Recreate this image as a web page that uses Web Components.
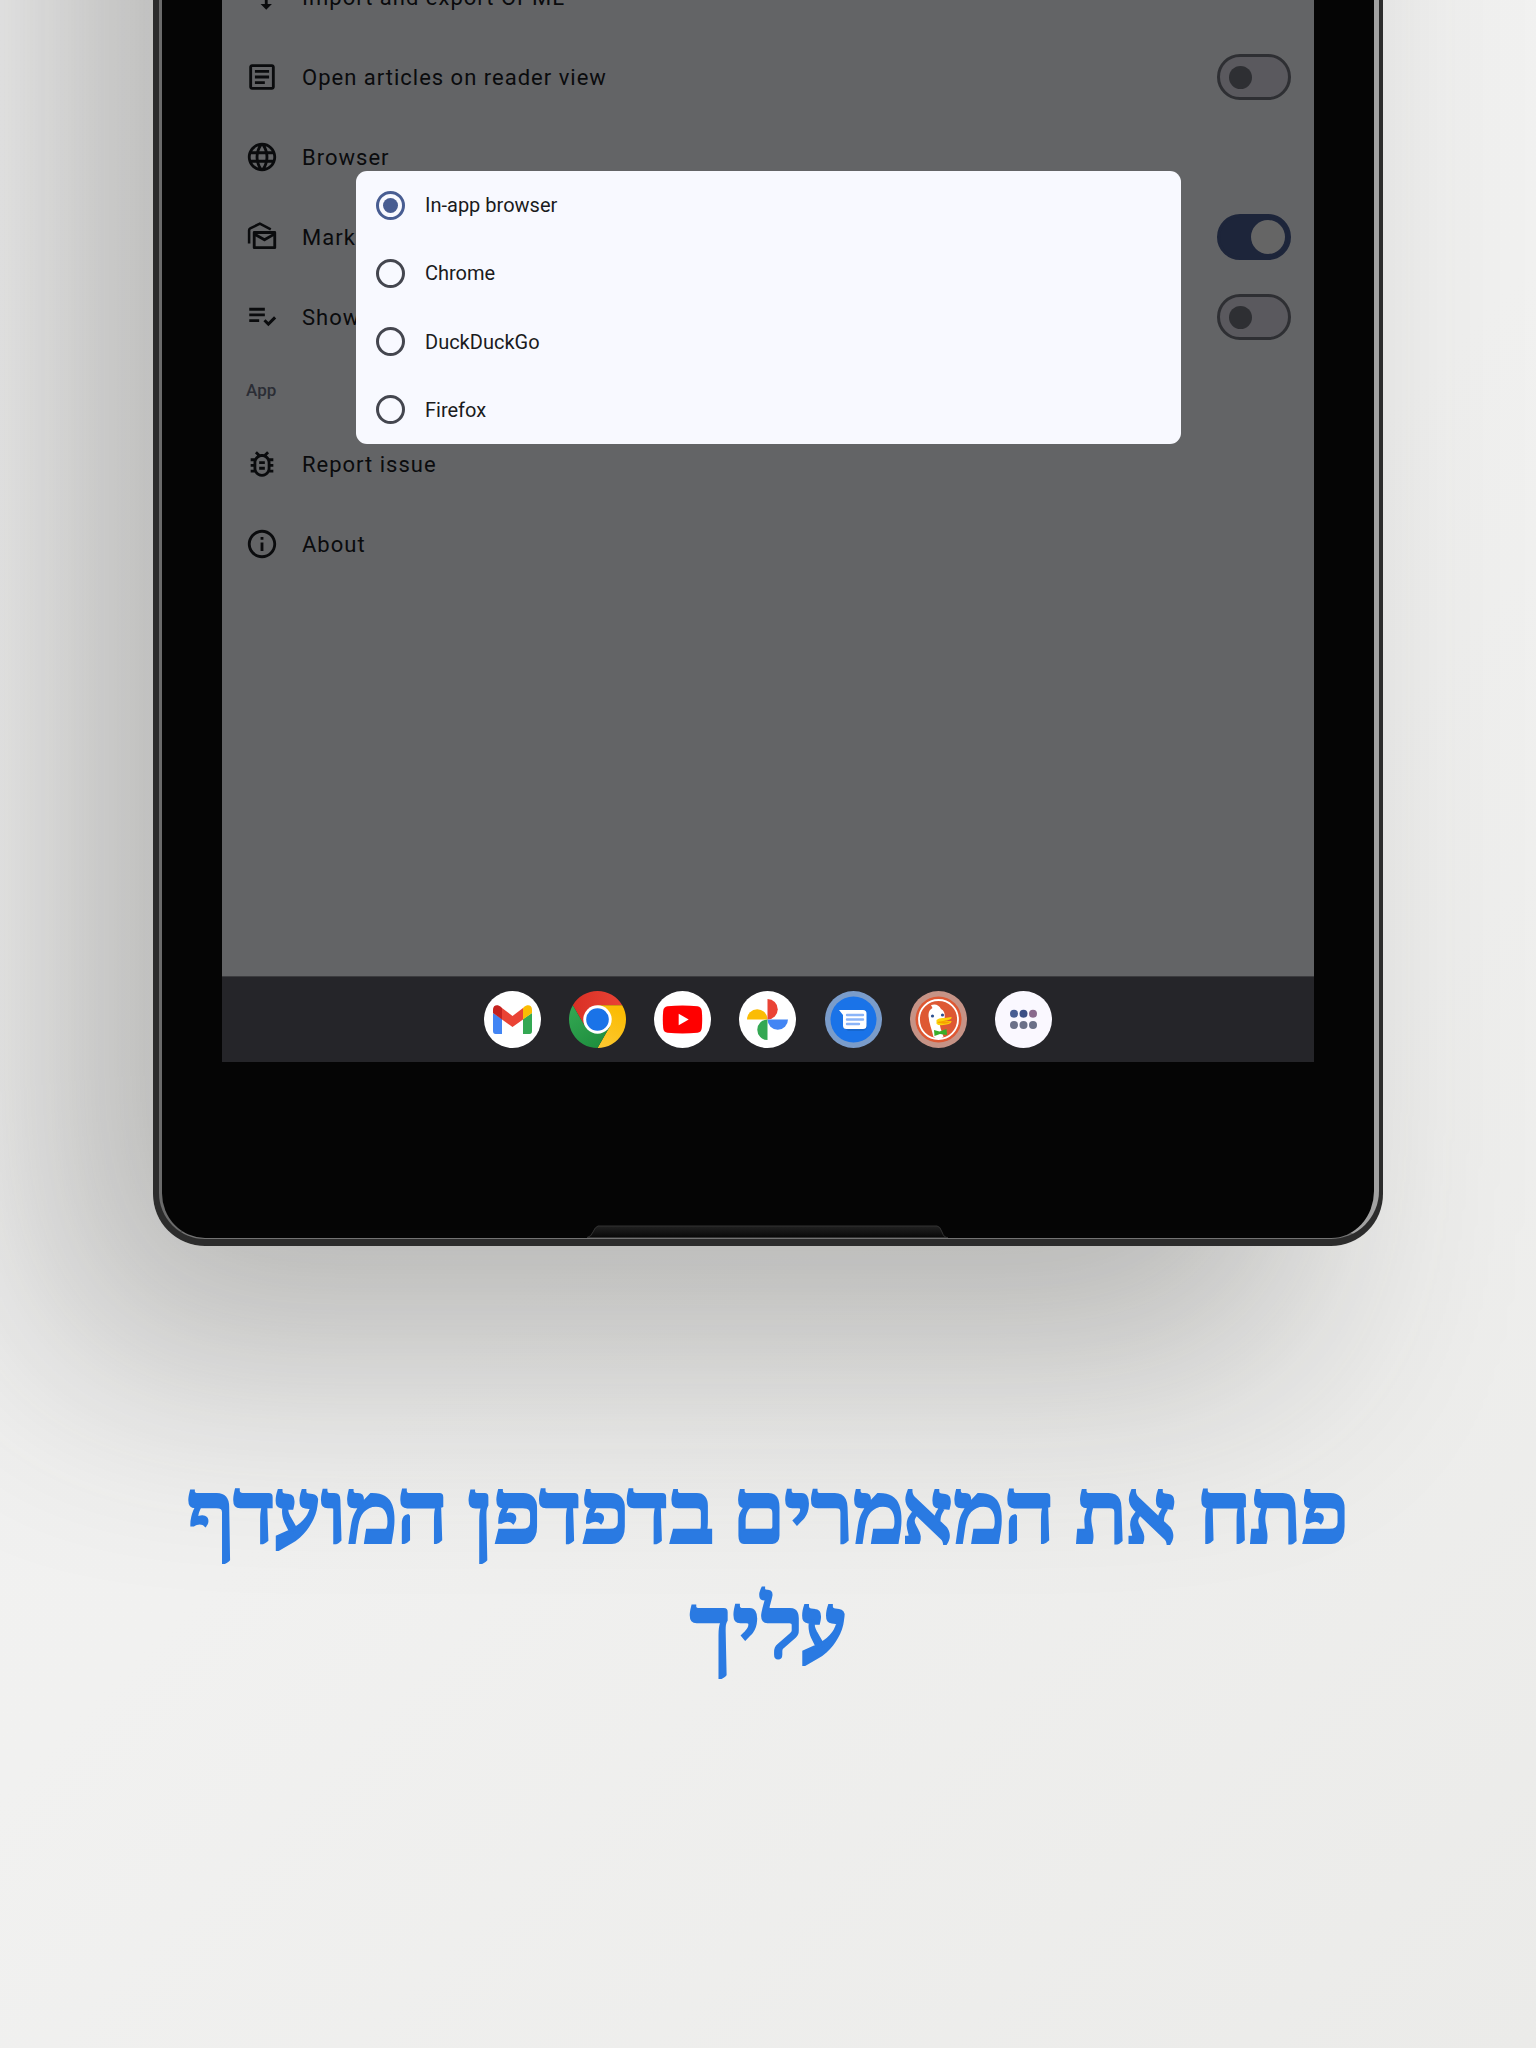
<!DOCTYPE html>
<html lang="he">
<head>
<meta charset="utf-8">
<title>Preferred browser</title>
<style>
html{min-height:100%;background:linear-gradient(135deg,#f2f2f2 0%,#f1f1f0 50%,#ebebe9 100%)}
body{margin:0;overflow-x:hidden}
</style>
</head>
<body>
<promo-page></promo-page>
<script>
const define = (name, html, setup) => customElements.define(name, class extends HTMLElement {
  connectedCallback() {
    if (this.shadowRoot) return;
    const t = document.createElement('template');
    t.innerHTML = html;
    this.attachShadow({ mode: 'open' }).append(t.content.cloneNode(true));
    if (setup) setup(this, this.shadowRoot);
  }
});

const ICONS = {
  swap: '<path d="M9 3 5 6.99h3V14h2V6.99h3L9 3zm7 14.01V10h-2v7.01h-3L15 21l4-3.99h-3z"/>',
  article: '<path d="M19 5v14H5V5h14m0-2H5c-1.1 0-2 .9-2 2v14c0 1.1.9 2 2 2h14c1.1 0 2-.9 2-2V5c0-1.1-.9-2-2-2z"/><path d="M14 17H7v-2h7v2zm3-4H7v-2h10v2zm0-4H7V7h10v2z"/>',
  globe: '<path d="M11.99 2C6.47 2 2 6.48 2 12s4.470 10 9.990 10C17.520 22 22 17.520 22 12S17.520 2 11.990 2zm6.930 6h-2.950c-.32-1.250-.78-2.450-1.380-3.560 1.840.63 3.370 1.910 4.330 3.560zM12 4.040c.83 1.200 1.480 2.530 1.910 3.960h-3.820c.43-1.430 1.080-2.760 1.910-3.960zM4.260 14C4.100 13.360 4 12.690 4 12s.1-1.360.26-2h3.380c-.08.66-.14 1.320-.14 2s.06 1.340.14 2H4.260zm.82 2h2.950c.32 1.250.78 2.450 1.380 3.560-1.840-.63-3.370-1.900-4.330-3.560zm2.950-8H5.080c.96-1.660 2.490-2.930 4.330-3.560C8.810 5.550 8.350 6.750 8.030 8zM12 19.960c-.83-1.200-1.480-2.530-1.910-3.960h3.820c-.43 1.430-1.080 2.760-1.910 3.960zM14.340 14H9.660c-.09-.66-.16-1.320-.16-2s.07-1.350.16-2h4.680c.09.65.16 1.320.16 2s-.07 1.340-.16 2zm.25 5.560c.6-1.110 1.060-2.310 1.380-3.560h2.950c-.96 1.650-2.490 2.930-4.330 3.560zM16.360 14c.08-.66.14-1.320.14-2s-.06-1.340-.14-2h3.380c.16.64.26 1.310.26 2s-.1 1.360-.26 2h-3.380z"/>',
  mail: '<path fill="none" stroke="currentColor" stroke-width="2" stroke-linejoin="round" d="M6.500 8.800h14.500v10.700H6.500zM6.500 9.800l7.250 4.200L21 9.800"/><path fill="none" stroke="currentColor" stroke-width="1.800" d="M2.900 16.500V7.200q0-.9.800-1.300L10.500 2.600 18.200 6.600"/>',
  check: '<path d="M14 5.500H3v2h11zM14 9.500H3v2h11zM3 15.500h7v-2H3zM20.500 11.500 22 13l-5.500 5.500-3.500-3.500L14.500 13.500l2 2z"/>',
  bug: '<path d="M20 8h-2.810c-.45-.78-1.070-1.450-1.820-1.960L17 4.410 15.590 3l-2.170 2.170C12.960 5.060 12.490 5 12 5s-.96.060-1.410.17L8.410 3 7 4.410l1.620 1.630C7.880 6.550 7.260 7.220 6.810 8H4v2h2.090c-.05.330-.09.660-.09 1v1H4v2h2v1c0 .34.040.67.090 1H4v2h2.810c1.040 1.790 2.970 3 5.190 3s4.150-1.210 5.190-3H20v-2h-2.090c.05-.33.090-.66.090-1v-1h2v-2h-2v-1c0-.34-.04-.67-.09-1H20V8zm-4 7c0 2.210-1.790 4-4 4s-4-1.790-4-4v-4c0-2.210 1.790-4 4-4s4 1.790 4 4v4zm-6-1h4v2h-4zm0-4h4v2h-4z"/>',
  info: '<path d="M11 7h2v2h-2zm0 4h2v6h-2zm1-9C6.480 2 2 6.480 2 12s4.480 10 10 10 10-4.480 10-10S17.520 2 12 2zm0 18c-4.410 0-8-3.590-8-8s3.590-8 8-8 8 3.590 8 8-3.590 8-8 8z"/>'
};

const APPS = {
  Gmail: '<circle cx="28.500" cy="28.500" r="28.500" fill="#fff"/><path fill="#4285f4" d="M9 22l9 6v15h-6.500Q9 43 9 40z"/><path fill="#34a853" d="M48 22l-9 6v15h6.500Q48 43 48 40z"/><path fill="#ea4335" d="M18 17l10.500 8L39 17v11.500L28.500 36 18 28.500z"/><path fill="#c5221f" d="M9 18.500c0-5 5-5.500 8-2.500l1 1v11.500L9 22z"/><path fill="#fbbc04" d="M48 18.500c0-5-5-5.500-8-2.500l-1 1v11.500L48 22z"/>',
  Chrome: '<defs><linearGradient id="r" x2="1"><stop stop-color="#d93025"/><stop offset="1" stop-color="#ea4335"/></linearGradient><linearGradient id="y" x1="0" y1="1" x2=".4" y2="0"><stop stop-color="#fcc934"/><stop offset="1" stop-color="#fbbc04"/></linearGradient><linearGradient id="g" y1="0" x2=".7" y2="1"><stop stop-color="#34a853"/><stop offset="1" stop-color="#1e8e3e"/></linearGradient></defs><path fill="url(#r)" d="M3.820 14.250A28.500 28.500 0 0 1 53.180 14.250L28.500 14.250 28.500 28.500 16 35.500z"/><path fill="url(#y)" d="M53.180 14.250A28.500 28.500 0 0 1 28.500 57L40.800 35.500 28.500 28.500V14.250z"/><path fill="url(#g)" d="M28.500 57A28.500 28.500 0 0 1 3.820 14.250L16.100 35.500 28.500 28.500 40.800 35.500z"/><circle cx="28.500" cy="28.500" r="14.200" fill="#fff"/><circle cx="28.500" cy="28.500" r="11.300" fill="#1a73e8"/>',
  YouTube: '<circle cx="28.500" cy="28.500" r="28.500" fill="#fff"/><path fill="red" d="M13.500 15.200Q28.500 14 43.500 15.200Q47.300 15.600 47.800 20Q48.600 28.500 47.800 37Q47.300 41.400 43.500 41.800Q28.500 43 13.500 41.800Q9.700 41.400 9.200 37Q8.400 28.500 9.200 20Q9.700 15.600 13.500 15.200z"/><path fill="#fff" d="M24.700 22.800l10 5.700-10 5.700z"/>',
  Photos: '<circle cx="28.500" cy="28.500" r="28.500" fill="#fff"/><path fill="#fbbc04" d="M8 28.500a10.250 10.250 0 0 1 20.500 0z"/><path fill="#ea4335" d="M28.500 8a10.250 10.250 0 0 1 0 20.500z"/><path fill="#4285f4" d="M49 28.500a10.250 10.250 0 0 1-20.500 0z"/><path fill="#34a853" d="M28.500 49a10.250 10.250 0 0 1 0-20.500z"/>',
  Messages: '<circle cx="28.500" cy="28.500" r="28.500" fill="#7a9cca"/><circle cx="28.500" cy="28.500" r="23" fill="#1a73e8"/><path fill="#1558b0" opacity=".45" d="M18 36l5 4h15q4-1 4-5v-3z"/><path fill="#fff" d="M14 19h24q3.500 0 3.500 3.500v12q0 3.500-3.500 3.500H21.500q-3.500 0-3.500-3.500V24z"/><path stroke="#8ab4f8" stroke-width="2.400" stroke-linecap="round" d="M22 24h16M22 28.500h16M22 33h12"/>',
  DuckDuckGo: '<circle cx="28.500" cy="28.500" r="28.500" fill="#c69386"/><circle cx="28.500" cy="28.500" r="23" fill="#de5833"/><circle cx="28.500" cy="28.500" r="19.500" fill="none" stroke="#fff" stroke-width="1.800"/><path fill="#fff" d="M21 14q7-2 10 4c4 2 4 6 3.500 10l-5 4 1 5 3 9q-5 3-10 0C22 39 18.500 31 18.500 24q0-5 4-7z"/><path fill="#fdd20a" d="M26.500 29q2.500-2.500 8-2l7-1q1 2-5 3.500l-3 .8 8-.3q0 2.500-5 3.500-8 2-10-.8z"/><path fill="#f6a000" d="M27 31q6-1 12-2.500l-5 2.500 7-.5q-4 2.800-9 2-4-.3-5-1.500z"/><circle cx="22.500" cy="25" r="1.600" fill="#2d4f8e"/><circle cx="32.500" cy="24" r="1.600" fill="#2d4f8e"/><path fill="#3aae2a" d="M24 39l5.500 1.500 7-2.500.5 6-7-1-5.500 2z"/>',
  'All apps': '<circle cx="28.500" cy="28.500" r="28.500" fill="#faf8ff"/><circle cx="19" cy="22.700" r="4" fill="#485d92"/><circle cx="28.500" cy="22.700" r="4" fill="#3b4f85"/><circle cx="38" cy="22.700" r="4" fill="#8a6a8d"/><g fill="#6b7088"><circle cx="19" cy="34" r="4"/><circle cx="28.500" cy="34" r="4"/><circle cx="38" cy="34" r="4"/></g>'
};

define('line-icon', `<style>:host{display:block;width:34px;height:34px;flex:none}svg{display:block;width:100%;height:100%;fill:currentColor}</style><svg viewBox="0 0 24 24" aria-hidden="true"></svg>`,
  (h, r) => { r.querySelector('svg').innerHTML = ICONS[h.getAttribute('name')]; });

define('setting-row', `<style>
:host{display:flex;align-items:center;gap:23px;height:80px;padding:0 23px;color:#0a0b0d;font-size:22px;line-height:30px;letter-spacing:1px}
label,span{flex:1;padding-top:2px;white-space:nowrap}
input{appearance:none;flex:none;margin:0;width:74px;height:46px;border:3px solid #2e2f33;border-radius:23px;background:#5a595e;display:flex;align-items:center;padding:0 9px;box-sizing:border-box}
input::before{content:"";width:23px;height:23px;border-radius:50%;background:#2e2f33}
input:checked{background:#1d253a;border-color:#1d253a;justify-content:flex-end;padding:0 3px}
input:checked::before{width:34px;height:34px;background:#656565}
</style>`, (h, r) => {
  const on = h.getAttribute('toggle') === 'on' ? ' checked' : '';
  const text = h.hasAttribute('toggle')
    ? `<label for="t"><slot></slot></label><input id="t" type="checkbox" role="switch"${on}>`
    : '<span><slot></slot></span>';
  const t = document.createElement('template');
  t.innerHTML = `<line-icon name="${h.getAttribute('icon')}"></line-icon>${text}`;
  r.append(t.content);
});

define('section-title', `<style>:host{display:flex;align-items:center;box-sizing:border-box;height:67px;padding:0 24px 2px;color:#2b2d35;font-size:17px;font-weight:500}</style><slot></slot>`);

define('browser-dialog', `<style>
:host{display:block;background:#f8f9ff;border-radius:11px;color:#1a1b20;font-size:20px}
fieldset{margin:0;padding:0;border:0;height:273px;display:flex;flex-direction:column}
label{flex:1;display:flex;align-items:center;gap:20px;padding:0 20px}
input{appearance:none;flex:none;margin:0;width:29px;height:29px;border:3px solid #44464f;border-radius:50%;display:grid;place-items:center}
input:checked{border-color:#485d92}
input:checked::before{content:"";width:15px;height:15px;border-radius:50%;background:#485d92}
</style><fieldset aria-label="Browser">
<label><input type="radio" name="b" checked>In-app browser</label>
<label><input type="radio" name="b">Chrome</label>
<label><input type="radio" name="b">DuckDuckGo</label>
<label><input type="radio" name="b">Firefox</label>
</fieldset>`);

define('task-bar', `<style>
:host{display:flex;justify-content:center;align-items:center;height:86px;background:#252529;border-top:1px solid #3c3c3f;box-sizing:border-box}
nav{width:569px;display:flex;justify-content:space-between}
button{width:57px;height:57px;padding:0;border:0;border-radius:50%;background:none}
svg{display:block;width:57px;height:57px}
</style><nav></nav>`, (h, r) => {
  for (const [name, art] of Object.entries(APPS)) {
    const b = document.createElement('button');
    b.setAttribute('aria-label', name);
    b.innerHTML = `<svg viewBox="0 0 57 57">${art}</svg>`;
    r.querySelector('nav').append(b);
  }
});

define('tablet-frame', `<style>
:host{display:block;position:relative;border-radius:0 0 52px 52px;background:#2c2c2c;padding:0 4px 7px 6px}
:host::before{content:"";position:absolute;z-index:-1;inset:-400px 0 0;border-radius:52px;box-shadow:-98px 108px 230px rgba(50,48,46,.31)}
.glass{background:#050505;border:solid;border-width:0 5px 1px 3px;border-color:#a2a2a2 #a2a2a2 #737373 #6b6b6b;border-radius:0 0 48px 46px;padding:0 60px}
.lip{display:block;width:362px;height:13px;margin:163px auto 0}
</style><div class="glass"><slot></slot><svg class="lip" viewBox="0 0 362 13"><defs><linearGradient id="l" x2="0" y2="1"><stop stop-color="#222"/><stop offset="1" stop-color="#080808"/></linearGradient></defs><path d="M0 12.500Q4 12 6 7T11 1H350Q353 1 355 7T361 12.500z" fill="url(#l)" stroke="#333"/></svg></div>`);

define('app-screen', `<style>
:host{display:flex;flex-direction:column;height:1062px;background:#636466;position:relative;overflow:hidden;font-family:Roboto,sans-serif}
.list{flex:1;margin-top:-43px}
browser-dialog{position:absolute;left:134px;right:133px;top:171px}
</style>
<div class="list">
<setting-row icon="swap">Import and export OPML</setting-row>
<setting-row icon="article" toggle="off">Open articles on reader view</setting-row>
<setting-row icon="globe">Browser</setting-row>
<setting-row icon="mail" toggle="on">Mark</setting-row>
<setting-row icon="check" toggle="off">Show</setting-row>
<section-title>App</section-title>
<setting-row icon="bug">Report issue</setting-row>
<setting-row icon="info">About</setting-row>
</div>
<task-bar></task-bar>
<browser-dialog></browser-dialog>`);

define('promo-page', `<style>
:host{display:block}
tablet-frame{margin:0 153px}
h1{margin:215px 153px 0;padding-bottom:350px;color:#2a7ae2;font:bold 82px/115px "Noto Serif Hebrew","Frank Ruehl CLM","Liberation Serif",serif;-webkit-text-stroke:2px #2a7ae2;text-align:center;direction:rtl}
</style>
<tablet-frame><app-screen></app-screen></tablet-frame>
<h1>פתח את המאמרים בדפדפן המועדף עליך</h1>`);
</script>
</body>
</html>
